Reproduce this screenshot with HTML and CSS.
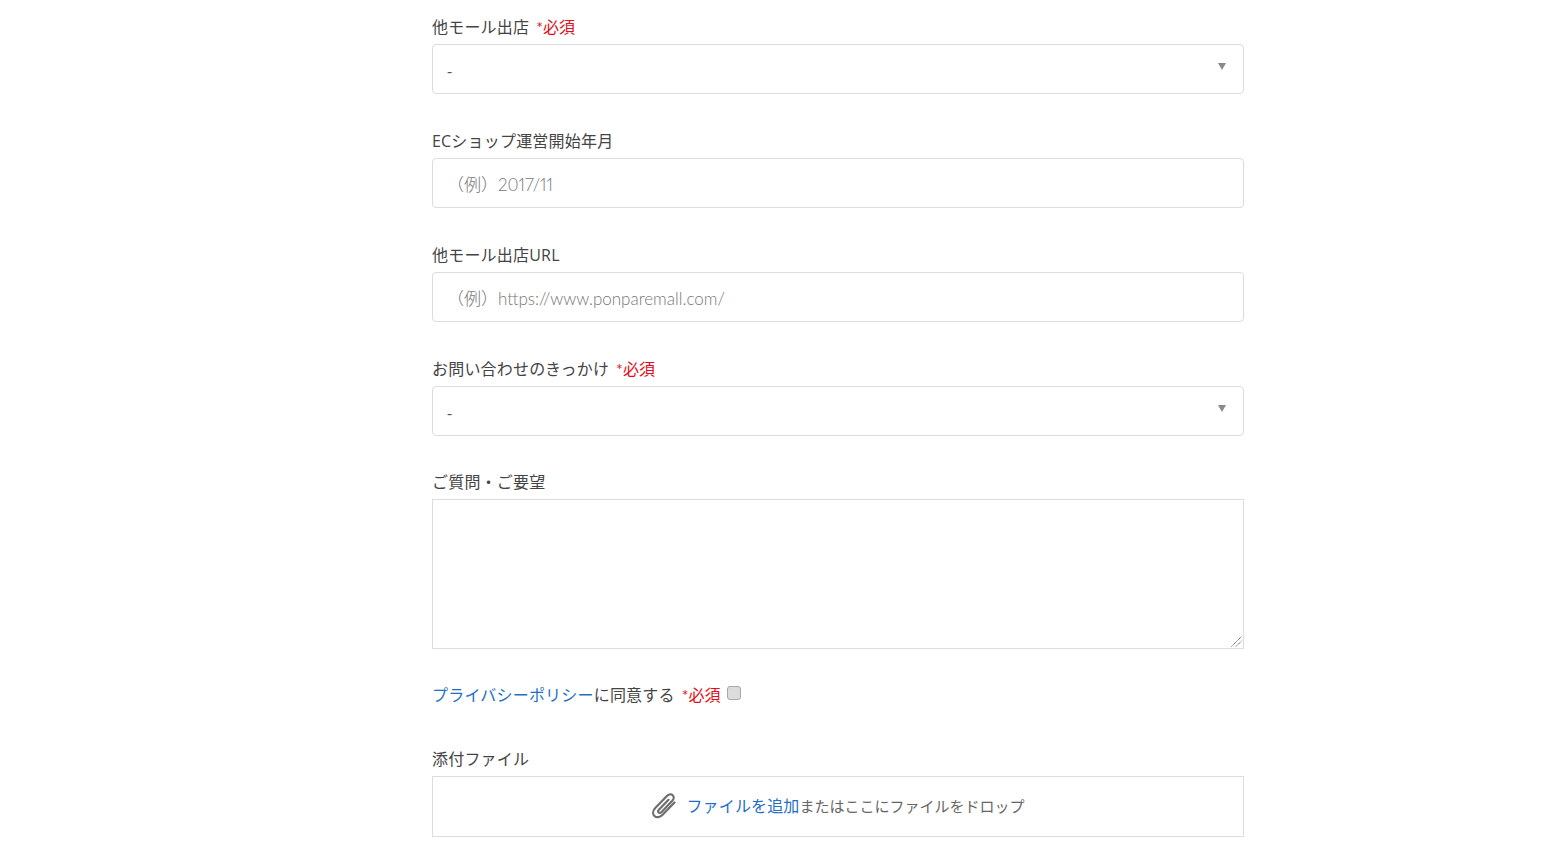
FILE: index.html
```html
<!DOCTYPE html>
<html lang="ja">
<head>
<meta charset="utf-8">
<title>お問い合わせ</title>
<link rel="stylesheet" href="styles.css">
</head>
<body>
<form class="form">
  <div class="group">
    <label class="label">他モール出店<span class="req">*必須</span></label>
    <div class="select"><span class="select-value">-</span><svg class="caret" width="8" height="7" viewBox="0 0 8 7"><path d="M0 0H8L4 7Z"/></svg></div>
  </div>
  <div class="group">
    <label class="label">ECショップ運営開始年月</label>
    <input class="input" type="text" placeholder="（例）2017/11">
  </div>
  <div class="group">
    <label class="label">他モール出店URL</label>
    <input class="input" type="text" placeholder="（例）https://www.ponparemall.com/">
  </div>
  <div class="group group-tight">
    <label class="label">お問い合わせのきっかけ<span class="req">*必須</span></label>
    <div class="select"><span class="select-value">-</span><svg class="caret" width="8" height="7" viewBox="0 0 8 7"><path d="M0 0H8L4 7Z"/></svg></div>
  </div>
  <div class="group group-tight">
    <label class="label">ご質問・ご要望</label>
    <div class="textarea-wrap">
      <textarea class="textarea"></textarea>
      <svg class="grip" width="11" height="11" viewBox="0 0 11 11"><path d="M0.500 10.500 10.500 0.500M5 10.500 10.500 5"/></svg>
    </div>
  </div>
  <div class="group agree">
    <a class="link" href="#">プライバシーポリシー</a><span>に同意する</span><span class="req">*必須</span><input class="check" type="checkbox">
  </div>
  <div class="group">
    <label class="label">添付ファイル</label>
    <div class="drop">
      <svg class="clip" width="26" height="26" viewBox="0 0 26 26" fill="none"><path d="M23.500 9.500 11.600 21.800c-2.700 2.700-6.200 3.200-8.200 1.200-2-2-1.600-5.500 1.100-8.200L15.900 3.100c1.800-1.900 4.300-2.300 5.800-.9 1.500 1.500 1.200 4-.6 5.800L10.600 19c-1 1-2.300 1.200-3 .5-.7-.7-.5-2 .5-3l9.400-9.700"/></svg>
      <a class="link" href="#">ファイルを追加</a><span class="drop-text">またはここにファイルをドロップ</span>
    </div>
  </div>
</form>
</body>
</html>
```
FILE: styles.css
```css
* { box-sizing: border-box; }
html, body { margin: 0; padding: 0; background: #fff; height: 843px; overflow: hidden; }
body {
  font-family: "Open Sans", "Noto Sans CJK JP", sans-serif;
  font-size: 16px;
  line-height: 24px;
  color: #444;
}
.form { width: 812px; margin-left: 432px; padding-top: 15px; }
.group { margin-bottom: 35px; }
.group-tight { margin-bottom: 34px; }
.label { display: block; margin-bottom: 5px; height: 24px; letter-spacing: .2px; }
.req { font-family: "Lato", "Noto Sans CJK JP", sans-serif; color: #e0111c; margin-left: 7px; letter-spacing: 0; }
.select, .input {
  display: block;
  width: 100%;
  height: 50px;
  border: 1px solid #ddd;
  border-radius: 4px;
  background: #fff;
}
.select { display: flex; align-items: center; justify-content: space-between; padding: 4px 17px 0 14px; color: #555; }
.caret { fill: #8a8a8a; margin-top: -9px; }
.input {
  padding: 2px 14px 0;
  font-family: "Lato", "Noto Sans CJK JP", sans-serif;
  font-size: 17px;
  font-weight: 300;
  font-variant-numeric: proportional-nums;
  color: #444;
  outline: none;
}
.input::placeholder { color: #777; opacity: 1; }
.textarea-wrap { position: relative; height: 150px; }
.textarea {
  display: block;
  width: 100%;
  height: 150px;
  border: 1px solid #ddd;
  border-radius: 0;
  background: #fff;
  font: inherit;
  padding: 8px 14px;
  outline: none;
  resize: none;
}
.grip { position: absolute; right: 2px; bottom: 2px; stroke: #555; stroke-width: 1; stroke-dasharray: 1.200 .6; }
.agree { display: flex; align-items: flex-start; height: 24px; margin-bottom: 40px; letter-spacing: .2px; }
.link { color: #1f6fc4; text-decoration: none; }
.check {
  appearance: none;
  width: 14px;
  height: 14px;
  margin: 3px 0 0 6px;
  border: 1px solid #a8a8a8;
  border-radius: 3px;
  background: #dcdcdc;
}
.drop {
  display: flex;
  align-items: center;
  justify-content: center;
  height: 61px;
  padding-bottom: 2px;
  border: 1px solid #ddd;
  color: #666;
}
.drop .link { letter-spacing: .15px; }
.drop-text { font-size: 15px; }
.clip { stroke: #6e6e6e; stroke-width: 2.200; stroke-linecap: round; margin-right: 9px; }
```
